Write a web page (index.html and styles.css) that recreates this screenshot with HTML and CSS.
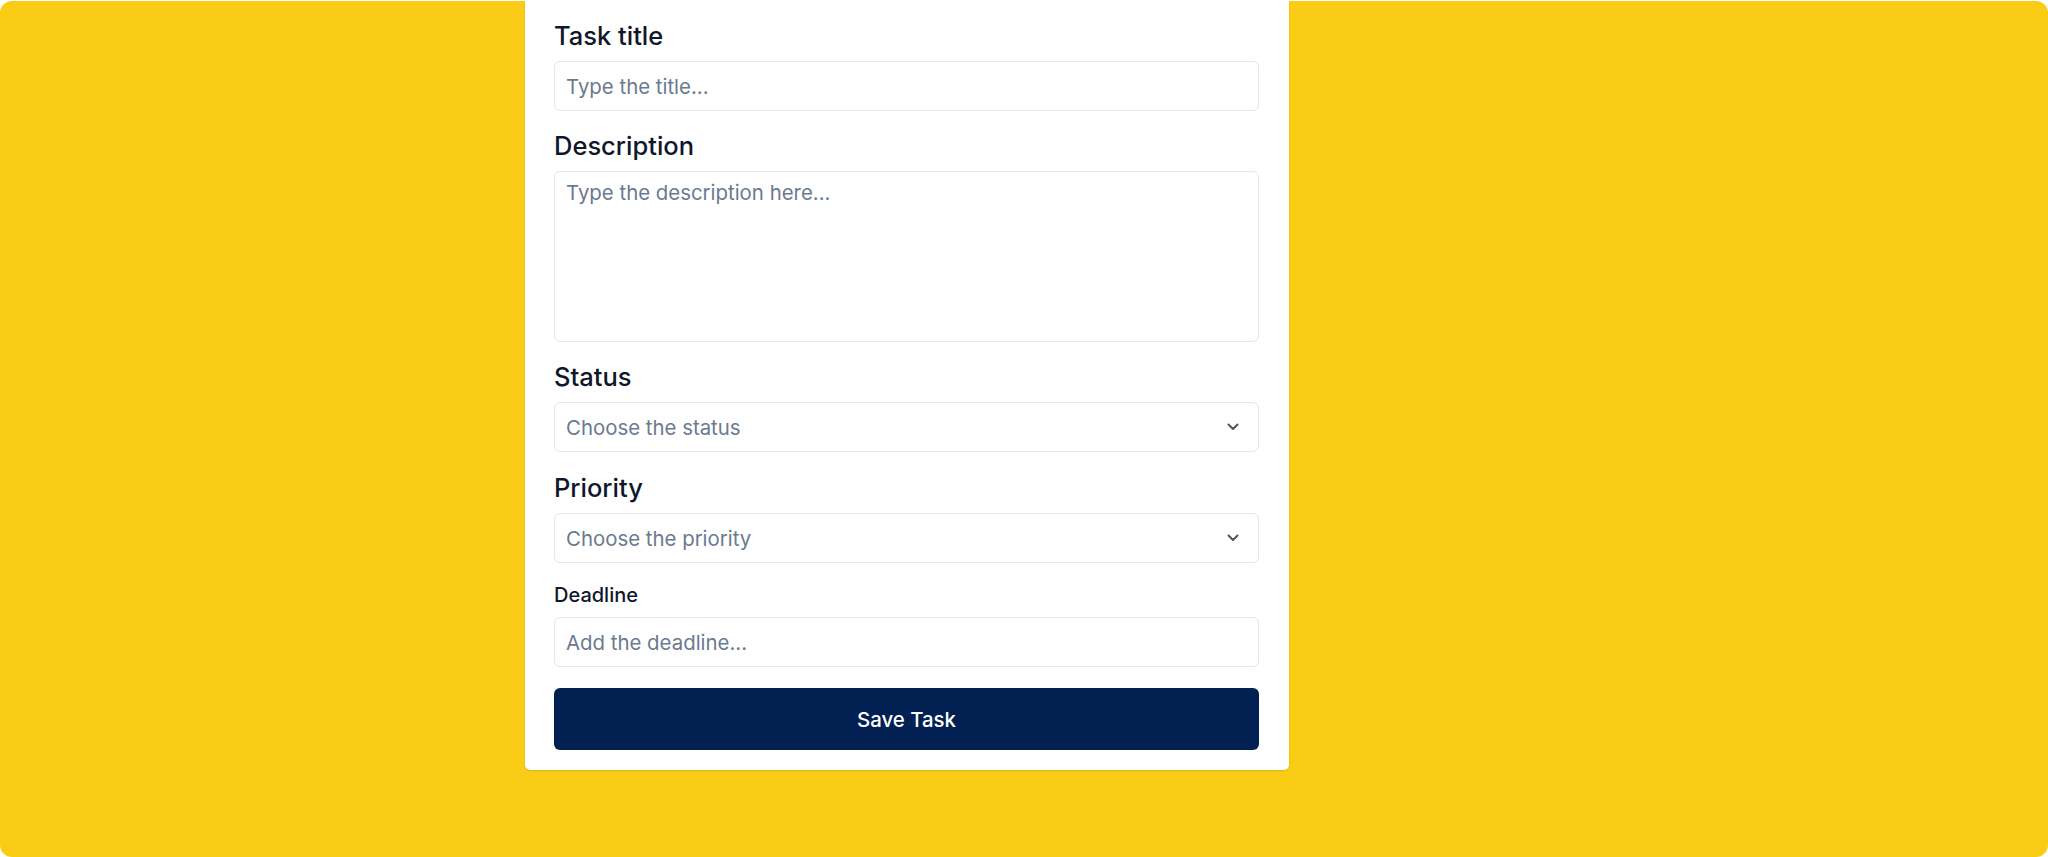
FILE: index.html
```html
<!DOCTYPE html>
<html>

<head>
  <meta charset="utf-8">
  <meta name="viewport" content="width=device-width, initial-scale=1">
  <title>New Task</title>
  <link rel="stylesheet" href="styles.css">
</head>

<body>
  <div class="panel">
    <form class="card">
      <label class="lbl" for="title">Task title</label>
      <input class="inp" type="text" id="title" placeholder="Type the title...">

      <label class="lbl" for="desc">Description</label>
      <textarea class="inp area" id="desc" placeholder="Type the description here..."></textarea>

      <label class="lbl" for="status">Status</label>
      <div class="sel-wrap">
        <select class="inp sel" id="status">
          <option value="" selected>Choose the status</option>
          <option>To do</option>
          <option>In progress</option>
          <option>Done</option>
        </select>
        <svg class="chev" width="12" height="8" viewBox="0 0 12 8">
          <path d="M1.5 1.5 L6 6 L10.5 1.5" fill="none" stroke="#4b5567" stroke-width="2" stroke-linecap="round" stroke-linejoin="round" />
        </svg>
      </div>

      <label class="lbl" for="priority">Priority</label>
      <div class="sel-wrap">
        <select class="inp sel" id="priority">
          <option value="" selected>Choose the priority</option>
          <option>Low</option>
          <option>Medium</option>
          <option>High</option>
        </select>
        <svg class="chev" width="12" height="8" viewBox="0 0 12 8">
          <path d="M1.5 1.5 L6 6 L10.5 1.5" fill="none" stroke="#4b5567" stroke-width="2" stroke-linecap="round" stroke-linejoin="round" />
        </svg>
      </div>

      <label class="lbl small" for="deadline">Deadline</label>
      <input class="inp" type="text" id="deadline" placeholder="Add the deadline...">

      <button class="btn" type="button">Save Task</button>
    </form>
  </div>
</body>

</html>
```

FILE: styles.css
```css
html,
body {
  margin: 0;
  padding: 0;
  background: #ffffff;
}

body {
  font-family: Inter, "Noto Sans", sans-serif;
}

.panel {
  margin-top: 1px;
  height: 856px;
  box-sizing: border-box;
  background: #facc15;
  border-radius: 12px;
  padding-left: 525px;
}

.card {
  width: 764px;
  box-sizing: border-box;
  background: #ffffff;
  border-radius: 0 0 5px 5px;
  box-shadow: 0 1px 2px rgba(0, 0, 0, 0.12);
  padding: 17px 30px 20px 29px;
  display: flex;
  flex-direction: column;
}

.lbl {
  font-size: 25.5px;
  line-height: 35px;
  font-weight: 500;
  color: #0f172a;
  margin-bottom: 8px;
}

.lbl.small {
  font-size: 20px;
  line-height: 29px;
  margin-bottom: 7px;
}

.inp {
  display: block;
  width: 100%;
  height: 50px;
  box-sizing: border-box;
  border: 1px solid #e2e6ee;
  border-radius: 6px;
  padding: 0 11px;
  font-family: Inter, "Noto Sans", sans-serif;
  font-size: 20.4px;
  color: #0f172a;
  background: #ffffff;
  margin: 0 0 17px 0;
  outline: none;
}

.inp::placeholder {
  color: #6b7a90;
}

.area {
  height: 171px;
  padding: 9px 11px;
  line-height: 24px;
  resize: none;
}

.sel-wrap {
  position: relative;
}

.sel {
  -webkit-appearance: none;
  appearance: none;
  color: #6b7a90;
  margin-bottom: 18px;
}

.chev {
  position: absolute;
  right: 20px;
  top: 21px;
  pointer-events: none;
}

.btn {
  margin-top: 4px;
  height: 62px;
  border: none;
  border-radius: 6px;
  background: #022052;
  color: #ffffff;
  font-family: Inter, "Noto Sans", sans-serif;
  font-size: 20.4px;
  font-weight: 500;
  cursor: pointer;
}
```
